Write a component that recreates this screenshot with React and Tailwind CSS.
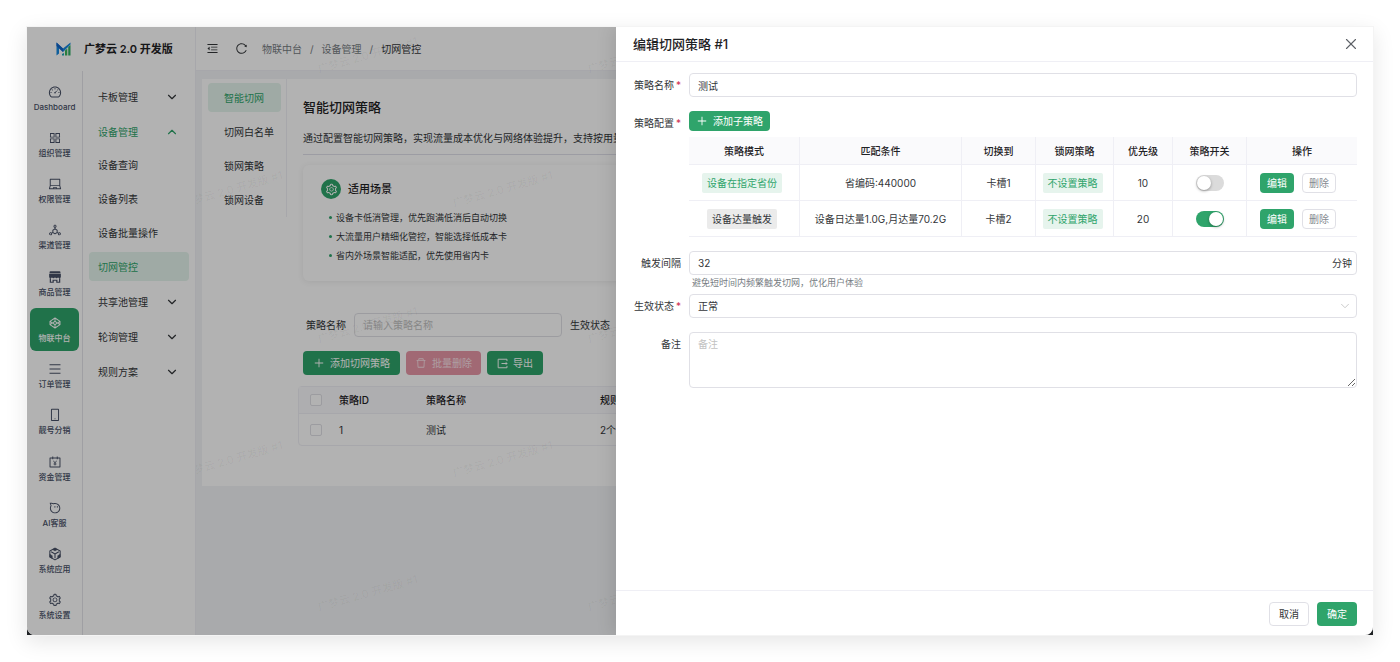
import React from "react";
import {
  AiOutlineDashboard,
  AiOutlineAppstore,
  AiOutlineLaptop,
  AiOutlineDeploymentUnit,
  AiOutlineCodepen,
  AiOutlineMenu,
  AiOutlineMobile,
  AiOutlineAccountBook,
  AiOutlineAliwangwang,
  AiOutlineSetting,
  AiOutlineMenuFold,
  AiOutlineReload,
  AiOutlinePlus,
  AiOutlineDelete,
} from "react-icons/ai";
import { ChevronDown, ChevronUp, X } from "lucide-react";

function ShopIcon({ className }) {
  return (
    <svg viewBox="0 0 16 16" className={className} fill="currentColor" aria-hidden="true">
      <path d="M2.8 1.3h10.4c.6 0 1 .4 1 1v1.300H1.800V2.300c0-.6.4-1 1-1z" />
      <path d="M1.300 4.200h13.400v3.500c0 1-.7 1.700-1.600 1.700-.8 0-1.400-.4-1.600-1-.3.600-1 1-1.700 1s-1.500-.4-1.800-1c-.3.600-1 1-1.800 1s-1.400-.4-1.700-1c-.2.600-.8 1-1.600 1-.9 0-1.600-.7-1.600-1.700z" />
      <path d="M2 9.500h1.400v3.800h1.800V11h5.600v2.300h1.800V9.500H14v5.200H9.400V12.300H6.600v2.400H2z" />
    </svg>
  );
}

function CubeIcon({ className }) {
  return (
    <svg viewBox="0 0 16 16" className={className} fill="none" stroke="currentColor" strokeWidth="1.200" strokeLinejoin="round" aria-hidden="true">
      <path d="M8 1.300 13.900 4.600v6.800L8 14.700 2.100 11.400V4.600z" />
      <path d="M3.600 5.500 8 8l4.400-2.500M8 8v4.800" />
      <path d="M8 1.300 5.200 2.900 8 4.500l2.800-1.600zM2.100 8.300v3.100l2.800 1.600V9.900zM13.900 8.300v3.100l-2.800 1.600V9.900z" fill="currentColor" strokeWidth=".5" />
    </svg>
  );
}

function ExportIcon({ className }) {
  return (
    <svg viewBox="0 0 16 16" className={className} fill="none" stroke="currentColor" strokeWidth="1.400" aria-hidden="true">
      <path d="M14.500 4.500V1.800H1.700v12.400h12.800v-2.700" />
      <path d="M6.500 8h8" />
      <path d="M12.600 5.700 15.600 8l-3 2.300z" fill="currentColor" stroke="none" />
    </svg>
  );
}

function Logo() {
  return (
    <svg viewBox="0 0 30 28" className="h-3.5 w-[15px]" aria-hidden="true">
      <path d="M1 1 14 13 29 1v4L14 20 6 12v11l-5 4z" fill="#1688e0" />
      <path d="M1 1 14 13v7L1 8z" fill="#1463c8" />
      <path d="M24.500 10 29 6v21h-4.500z" fill="#2fae62" />
      <path d="M18 17l4.500-4v14H18z" fill="#3cb55a" />
      <path d="M12 24l4-2v5h-4z" fill="#1ba7b8" />
    </svg>
  );
}

const MODULES = [
  { label: "Dashboard", Icon: AiOutlineDashboard },
  { label: "组织管理", Icon: AiOutlineAppstore },
  { label: "权限管理", Icon: AiOutlineLaptop },
  { label: "渠道管理", Icon: AiOutlineDeploymentUnit },
  { label: "商品管理", Icon: ShopIcon },
  { label: "物联中台", Icon: AiOutlineCodepen, active: true },
  { label: "订单管理", Icon: AiOutlineMenu },
  { label: "靓号分销", Icon: AiOutlineMobile },
  { label: "资金管理", Icon: AiOutlineAccountBook },
  { label: "AI客服", Icon: AiOutlineAliwangwang },
  { label: "系统应用", Icon: CubeIcon },
  { label: "系统设置", Icon: AiOutlineSetting },
];

const MENU = [
  { label: "卡板管理" },
  {
    label: "设备管理",
    open: true,
    children: ["设备查询", "设备列表", "设备批量操作", "切网管控"],
  },
  { label: "共享池管理" },
  { label: "轮询管理" },
  { label: "规则方案" },
];

const TABS = ["智能切网", "切网白名单", "锁网策略", "锁网设备"];

const SCENES = [
  "设备卡低消管理，优先跑满低消后自动切换",
  "大流量用户精细化管控，智能选择低成本卡",
  "省内外场景智能适配，优先使用省内卡",
];

const RULES = [
  { mode: "设备在指定省份", green: true, match: "省编码:440000", slot: "卡槽1", priority: 10, on: false },
  { mode: "设备达量触发", green: false, match: "设备日达量1.0G,月达量70.2G", slot: "卡槽2", priority: 20, on: true },
];

const WATERMARKS = [
  [120, 20], [390, 20],
  [-15, 154], [255, 154],
  [120, 290], [390, 290],
  [-15, 424], [255, 424],
  [120, 558], [390, 558],
];

function Watermark() {
  return (
    <div className="pointer-events-none absolute inset-0 overflow-hidden" aria-hidden="true">
      {WATERMARKS.map(([left, top]) => (
        <span
          key={left + "-" + top}
          className="absolute -rotate-[16deg] text-[11px] leading-4 whitespace-nowrap text-black/5"
          style={{ left, top }}
        >
          广梦云 2.0 开发版 #1
        </span>
      ))}
    </div>
  );
}

function Sidebar() {
  return (
    <aside className="flex w-[169px] shrink-0 flex-col border-r border-[#efeff5] bg-white">
      <div className="flex h-11 shrink-0 items-center gap-[13px] pl-[29px]">
        <Logo />
        <strong className="text-[11px] font-semibold whitespace-nowrap text-[#1f2225]">广梦云 2.0 开发版</strong>
      </div>
      <div className="flex min-h-0 flex-1">
        <nav className="flex w-14 shrink-0 flex-col justify-between border-r border-[#e4e4ea] px-[3px] py-1.5">
          {MODULES.map(({ label, Icon, active }) => (
            <a
              key={label}
              href="#"
              className={
                active
                  ? "flex h-[43px] flex-col items-center justify-center gap-0.5 rounded-md bg-[#2fa46b] text-white"
                  : "flex h-[43px] flex-col items-center justify-center gap-0.5 text-[#475066]"
              }
            >
              <Icon className="size-3.5" />
              <span className="text-[8px] leading-3 font-medium whitespace-nowrap">{label}</span>
            </a>
          ))}
        </nav>
        <nav className="flex flex-1 flex-col gap-1.5 px-1.5 pt-[11px]">
          {MENU.map((item) => (
            <div key={item.label}>
              <button
                type="button"
                className={
                  item.open
                    ? "flex h-[29px] w-full items-center justify-between pr-2.5 pl-[9px] text-[#2fa46b]"
                    : "flex h-[29px] w-full items-center justify-between pr-2.5 pl-[9px] text-[#333639]"
                }
              >
                <span>{item.label}</span>
                {item.open ? <ChevronUp className="size-3.5" /> : <ChevronDown className="size-3.5" />}
              </button>
              {item.children && (
                <div className="flex flex-col gap-[5px] pt-1">
                  {item.children.map((child) => (
                    <a
                      key={child}
                      href="#"
                      className={
                        child === "切网管控"
                          ? "flex h-[29px] items-center rounded-sm bg-[#e4f4ec] pl-[9px] text-[#2fa46b]"
                          : "flex h-[29px] items-center pl-[9px] text-[#333639]"
                      }
                    >
                      {child}
                    </a>
                  ))}
                </div>
              )}
            </div>
          ))}
        </nav>
      </div>
    </aside>
  );
}

function TopBar() {
  return (
    <header className="flex h-11 shrink-0 items-center border-b border-[#efeff5] bg-white pl-2.5 text-[#333639]">
      <button type="button" aria-label="收起菜单">
        <AiOutlineMenuFold className="size-[13px]" />
      </button>
      <button type="button" aria-label="刷新" className="ml-4">
        <AiOutlineReload className="size-[13px]" />
      </button>
      <nav className="ml-3.5 flex gap-2 whitespace-nowrap text-[#767c82]">
        <a href="#">物联中台</a>
        <span>/</span>
        <a href="#">设备管理</a>
        <span>/</span>
        <span className="text-[#333639]">切网管控</span>
      </nav>
    </header>
  );
}

const box = "rounded-sm border border-[#e0e0e6] bg-white";
const check = "block size-3 appearance-none rounded-xs border border-[#e0e0e6] bg-white checked:bg-[#2fa46b]";
const solid = "flex h-6 items-center gap-[5px] rounded-sm bg-[#2fa46b] px-2.5 whitespace-nowrap text-white";

function StrategyPage() {
  return (
    <section className="mt-2 ml-1.5 flex h-[407px] bg-white">
      <nav className="flex h-[138px] w-[85px] shrink-0 flex-col gap-[5px] border-r border-[#efeff5] py-1 pr-[5px] pl-1.5">
        {TABS.map((tab, i) => (
          <a
            key={tab}
            href="#"
            className={
              i === 0
                ? "flex h-[29px] shrink-0 items-center rounded-sm bg-[#e4f4ec] pl-4 whitespace-nowrap text-[#2fa46b]"
                : "flex h-[29px] shrink-0 items-center pl-4 whitespace-nowrap text-[#333639]"
            }
          >
            {tab}
          </a>
        ))}
      </nav>
      <div className="min-w-0 flex-1 overflow-hidden pl-4">
        <h1 className="pt-[18px] text-[13px] leading-5 font-medium text-[#1f2225]">智能切网策略</h1>
        <p className="mt-2.5 h-7 border-b border-[#e0e0ea] leading-[22px] whitespace-nowrap">
          通过配置智能切网策略，实现流量成本优化与网络体验提升，支持按用量
        </p>
        <div className="mt-2.5 h-[116px] rounded-md px-[18px] pt-3.5 shadow-[0_1px_6px_rgba(0,0,0,0.08)]">
          <h2 className="flex items-center gap-[7px] text-[11px] font-medium text-[#1f2225]">
            <span className="flex size-5 items-center justify-center rounded-full bg-[#2fa46b] text-white">
              <AiOutlineSetting className="size-[13px]" />
            </span>
            适用场景
          </h2>
          <ul className="mt-[9px] pl-2 text-[9px] leading-[19px] whitespace-nowrap">
            {SCENES.map((scene) => (
              <li key={scene} className="flex items-center gap-1">
                <span className="size-[3px] rounded-full bg-[#2fa46b]" />
                {scene}
              </li>
            ))}
          </ul>
        </div>
        <form className="mt-8 flex items-center pl-[3px] whitespace-nowrap" onSubmit={(e) => e.preventDefault()}>
          <label htmlFor="filter-name">策略名称</label>
          <input
            id="filter-name"
            placeholder="请输入策略名称"
            className={box + " ml-2 h-6 w-[208px] px-2 placeholder:text-[#c2c2c2]"}
          />
          <span className="ml-2">生效状态</span>
        </form>
        <div className="mt-3.5 flex gap-1.5">
          <button type="button" className={solid}>
            <AiOutlinePlus className="size-3" />
            添加切网策略
          </button>
          <button type="button" disabled className="flex h-6 items-center gap-[5px] rounded-sm bg-[#e797a7] px-[9px] whitespace-nowrap text-[#f9e2e7]">
            <AiOutlineDelete className="size-3" />
            批量删除
          </button>
          <button type="button" className={solid}>
            <ExportIcon className="size-[11px]" />
            导出
          </button>
        </div>
        <table className="mt-[11px] -ml-[5px] w-full table-fixed border-separate border-spacing-0 rounded-sm border border-[#efeff5] text-left">
          <colgroup>
            <col className="w-[32px]" />
            <col className="w-[87px]" />
            <col className="w-[174px]" />
            <col />
          </colgroup>
          <thead>
            <tr className="h-[27px] bg-[#fafafc] text-[#1f2225]">
              <th className="border-b border-[#efeff5] pl-[11px]">
                <input type="checkbox" aria-label="全选" className={check} />
              </th>
              <th className="border-b border-[#efeff5] pl-2 font-medium">策略ID</th>
              <th className="border-b border-[#efeff5] pl-2 font-medium">策略名称</th>
              <th className="border-b border-[#efeff5] pl-2 font-medium">规则</th>
            </tr>
          </thead>
          <tbody>
            <tr className="h-[31px]">
              <td className="pl-[11px]">
                <input type="checkbox" aria-label="选择策略1" className={check} />
              </td>
              <td className="pl-2">1</td>
              <td className="pl-2">测试</td>
              <td className="pl-2">2个</td>
            </tr>
          </tbody>
        </table>
      </div>
    </section>
  );
}

function Field({ label, htmlFor, required, className, children }) {
  return (
    <div className={"grid grid-cols-[48px_minmax(0,1fr)] gap-2 " + className}>
      <label htmlFor={htmlFor} className="flex h-6 items-center justify-end gap-0.5 whitespace-nowrap">
        {label}
        {required && <span className="text-[#d03050]">*</span>}
      </label>
      <div>{children}</div>
    </div>
  );
}

const greenTag = "mr-1 inline-flex h-5 items-center rounded-xs bg-[#e6f4ed] px-[5px] text-[#2fa46b]";
const greyTag = "mr-1 inline-flex h-5 items-center rounded-xs bg-[#ebebeb] px-[5px] text-[#333639]";
const headCell = "border-r border-b border-[#efeff5] font-medium last:border-r-0";
const cell = "h-9 border-r border-b border-[#efeff5] last:border-r-0";

function RuleTable() {
  return (
    <table className="mt-1.5 w-full table-fixed border-separate border-spacing-0 text-center whitespace-nowrap">
      <colgroup>
        <col className="w-[111px]" />
        <col className="w-[162px]" />
        <col className="w-[74px]" />
        <col className="w-[78px]" />
        <col className="w-[59px]" />
        <col className="w-[74px]" />
        <col />
      </colgroup>
      <thead>
        <tr className="h-7 bg-[#fafafc] text-[#1f2225]">
          {["策略模式", "匹配条件", "切换到", "锁网策略", "优先级", "策略开关", "操作"].map((h) => (
            <th key={h} className={headCell}>{h}</th>
          ))}
        </tr>
      </thead>
      <tbody>
        {RULES.map((rule) => (
          <tr key={rule.mode}>
            <td className={cell}>
              <span className={rule.green ? greenTag : greyTag}>{rule.mode}</span>
            </td>
            <td className={cell}>{rule.match}</td>
            <td className={cell}>{rule.slot}</td>
            <td className={cell}>
              <span className={greenTag}>不设置策略</span>
            </td>
            <td className={cell}>{rule.priority}</td>
            <td className={cell}>
              <input
                type="checkbox"
                role="switch"
                aria-label="策略开关"
                defaultChecked={rule.on}
                className="inline-flex h-4 w-7 appearance-none items-center rounded-full bg-[#dbdbdb] p-px align-middle before:size-3.5 before:rounded-full before:bg-white before:shadow-[0_1px_3px_rgba(0,0,0,0.35)] checked:justify-end checked:bg-[#2fa46b]"
              />
            </td>
            <td className={cell}>
              <div className="flex justify-center gap-2 pr-2">
                <button type="button" className="h-5 rounded-sm bg-[#2fa46b] px-[7px] text-white">编辑</button>
                <button type="button" className={box + " h-5 px-1.5 text-[#858a90]"}>删除</button>
              </div>
            </td>
          </tr>
        ))}
      </tbody>
    </table>
  );
}

function Drawer() {
  return (
    <div
      role="dialog"
      aria-labelledby="drawer-title"
      className="absolute inset-y-0 right-0 flex w-[757px] max-w-full flex-col bg-white shadow-[-4px_0_16px_rgba(0,0,0,0.10)]"
    >
      <header className="flex h-[35px] shrink-0 items-center justify-between border-b border-[#efeff5] pr-[13px] pb-px pl-[17px]">
        <h2 id="drawer-title" className="text-[13px] font-medium text-[#1f2225]">编辑切网策略 #1</h2>
        <button type="button" aria-label="关闭" className="text-[#5c6066]">
          <X className="size-[18px]" strokeWidth={1.5} />
        </button>
      </header>
      <form className="min-h-0 flex-1 pt-[11px] pr-4 pl-[17px]" onSubmit={(e) => e.preventDefault()}>
        <Field label="策略名称" htmlFor="name" required className="mb-3.5">
          <input id="name" defaultValue="测试" className={box + " block h-6 w-full px-2"} />
        </Field>
        <Field label="策略配置" htmlFor="add-rule" required className="mb-3.5">
          <button id="add-rule" type="button" className="flex h-5 items-center gap-[5px] rounded-sm bg-[#2fa46b] px-[7px] text-white">
            <AiOutlinePlus className="size-3" />
            添加子策略
          </button>
          <RuleTable />
        </Field>
        <Field label="触发间隔" htmlFor="interval" className="mb-[3px]">
          <div className={box + " flex h-6 items-center pr-1 pl-2"}>
            <input id="interval" defaultValue="32" className="min-w-0 flex-1 outline-none" />
            <span>分钟</span>
          </div>
          <p className="pl-[3px] text-[9px] leading-4 text-[#767c82]">避免短时间内频繁触发切网，优化用户体验</p>
        </Field>
        <Field label="生效状态" htmlFor="status" required className="mb-3.5">
          <div className="relative">
            <select id="status" className={box + " block h-6 w-full appearance-none px-2"}>
              <option>正常</option>
            </select>
            <ChevronDown className="pointer-events-none absolute top-[5px] right-[5px] size-3.5 text-[#c2c2c2]" strokeWidth={1.5} />
          </div>
        </Field>
        <Field label="备注" htmlFor="remark" className="">
          <textarea
            id="remark"
            placeholder="备注"
            className={box + " block h-14 w-full resize-y px-2 py-[3px] leading-4 placeholder:text-[#c2c2c2]"}
          />
        </Field>
      </form>
      <footer className="flex h-[45px] shrink-0 items-center justify-end gap-2 border-t border-[#efeff5] pt-px pr-4">
        <button type="button" className={box + " h-6 px-[9px]"}>取消</button>
        <button type="button" className="h-6 rounded-sm bg-[#2fa46b] px-2.5 text-white">确定</button>
      </footer>
    </div>
  );
}

export default function App() {
  return (
    <div className="h-screen bg-white p-[26px] font-['Inter','Noto_Sans_CJK_SC',sans-serif] text-[10px] leading-4 text-[#333639]">
      <div className="h-full border border-[#f4f4f4] bg-[#1f2225] shadow-[0_6px_20px_rgba(0,0,0,0.10)]">
        <div className="relative flex h-full overflow-hidden rounded-b-lg bg-[#f3f4f6]">
          <Sidebar />
          <main className="relative flex min-w-0 flex-1 flex-col">
            <TopBar />
            <StrategyPage />
            <Watermark />
          </main>
          <div className="absolute inset-0 bg-black/30" />
          <Drawer />
        </div>
      </div>
    </div>
  );
}
